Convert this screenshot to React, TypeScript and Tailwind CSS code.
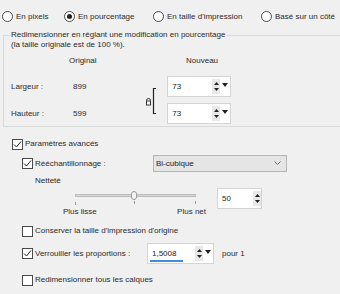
import React from "react";

const Radio = ({ checked, label }: { checked?: boolean; label: string }) => (
  <div className="flex items-center gap-[3px]">
    <div className="w-[11px] h-[11px] rounded-full border border-[#4a4a4a] bg-white flex items-center justify-center">
      {checked && <div className="w-[5px] h-[5px] rounded-full bg-[#222]" />}
    </div>
    <span>{label}</span>
  </div>
);

const Check = ({ checked }: { checked?: boolean }) => (
  <div className="w-[11px] h-[11px] border border-[#4a4a4a] bg-white flex items-center justify-center shrink-0">
    {checked && (
      <svg width="9" height="9" viewBox="0 0 9 9">
        <path d="M1 4.5 L3.5 7 L8 1.5" fill="none" stroke="#222" strokeWidth="1" />
      </svg>
    )}
  </div>
);

const Spin = ({ value, w, drop = true, underline = false }: { value: string; w: number; drop?: boolean; underline?: boolean }) => (
  <div className="flex items-stretch h-[21px] border border-[#d4d4d4] bg-white" style={{ width: w }}>
    <div className="flex-1 relative flex items-center pl-[4px] text-[#222]">
      {value}
      {underline && <div className="absolute left-[2px] bottom-[1px] w-[33px] h-[2px] bg-[#3d8fd6]" />}
    </div>
    <div className="w-[8px] my-[2px] bg-[#e8e8e8] flex flex-col items-center justify-center gap-[3px]">
      <svg width="5" height="3" viewBox="0 0 5 3"><path d="M0 3 L2.5 0 L5 3Z" fill="#222" /></svg>
      <svg width="5" height="3" viewBox="0 0 5 3"><path d="M0 0 L2.5 3 L5 0Z" fill="#222" /></svg>
    </div>
    {drop && (
      <div className="w-[10px] flex flex-col items-center pt-[6px]">
        <svg width="6" height="4" viewBox="0 0 6 4"><path d="M0 0 L3 4 L6 0Z" fill="#222" /></svg>
      </div>
    )}
  </div>
);

export default function App() {
  return (
    <div
      className="w-[340px] h-[294px] bg-[#f0f0f0] text-[#2a2a2a] text-[8px] leading-[10px] overflow-hidden"
      style={{ fontFamily: '"Liberation Sans", Arial, sans-serif' }}
    >
      <div className="flex items-center pt-[11px] pl-[2px] h-[22px]">
        <div className="w-[62px]"><Radio label="En pixels" /></div>
        <div className="w-[89px]"><Radio checked label="En pourcentage" /></div>
        <div className="w-[108px]"><Radio label="En taille d'impression" /></div>
        <Radio label="Basé sur un côté" />
      </div>

      <div className="ml-[3px] mt-[13px] w-[360px] h-[92px] border border-[#dadada]">
        <div className="-mt-[6px] pl-[7px]">
          <div><span className="bg-[#f0f0f0] pr-[2px]">Redimensionner en réglant une modification en pourcentage</span></div>
          <div>(la taille originale est de 100 %).</div>
        </div>
        <div className="grid grid-cols-[62px_74px_21px_70px] pl-[7px] mt-[6px]">
          <div />
          <div className="-ml-[4px]">Original</div>
          <div />
          <div className="pl-[18px]">Nouveau</div>
        </div>
        <div className="flex pl-[7px] mt-[10px]">
          <div className="flex flex-col">
            <div className="h-[21px] flex items-center"><span className="w-[62px]">Largeur :</span><span>899</span></div>
            <div className="h-[21px] mt-[6px] flex items-center"><span className="w-[62px]">Hauteur :</span><span>599</span></div>
          </div>
          <div className="ml-[60px] w-[21px] flex items-center pt-[2px]">
            <svg width="12" height="28" viewBox="0 0 12 28">
              <path d="M0.5 13.5 a2 2 0 0 1 4 0" fill="none" stroke="#333" strokeWidth="1" />
              <rect x="0.5" y="14" width="4" height="4" fill="#fff" stroke="#333" strokeWidth="1" />
              <path d="M10 1.5 H7.5 V26.5 H10" fill="none" stroke="#222" strokeWidth="1.2" />
            </svg>
          </div>
          <div className="flex flex-col">
            <Spin value="73" w={64} />
            <div className="mt-[6px]"><Spin value="73" w={64} /></div>
          </div>
        </div>
      </div>

      <div className="pl-[12px] mt-[11px] flex items-center gap-[2px] h-[12px]">
        <Check checked /> <span>Paramètres avancés</span>
      </div>
      <div className="pl-[22px] mt-[5px] flex items-center h-[17px]">
        <Check checked />
        <span className="ml-[2px] w-[118px]">Rééchantillonnage :</span>
        <div className="w-[134px] h-[17px] bg-[#e5e5e5] border border-[#b5b5b5] flex items-center pl-[2px] pr-[5px] justify-between text-[#222]">
          <span>Bi-cubique</span>
          <svg width="7" height="5" viewBox="0 0 7 5"><path d="M0.5 0.5 L3.5 3.5 L6.5 0.5" fill="none" stroke="#666" strokeWidth="1" /></svg>
        </div>
      </div>
      <div className="pl-[35px] mt-[4px]">Netteté</div>
      <div className="flex pl-[63px] mt-[2px]">
        <div className="w-[144px] flex flex-col">
          <div className="ml-[12px] w-[121px] h-[16px] relative">
            <div className="absolute left-0 right-0 top-[6px] h-[3px] bg-[#d6d6d6] border border-[#bdbdbd]" />
            <div className="absolute left-[56px] top-[3px] w-[6px] h-[9px] rounded-[3px] bg-[#f4f4f4] border border-[#9a9a9a]" />
            <div className="absolute left-0 top-[14px] w-[1px] h-[3px] bg-[#999]" />
            <div className="absolute left-[59px] top-[13px] w-[1px] h-[3px] bg-[#999]" />
            <div className="absolute right-0 top-[13px] w-[1px] h-[3px] bg-[#999]" />
          </div>
          <div className="flex justify-between mt-[3px]">
            <span>Plus lisse</span>
            <span className="mr-[1px]">Plus net</span>
          </div>
        </div>
        <div className="ml-[10px] mt-[0px]">
          <Spin value="50" w={45} drop={false} />
        </div>
      </div>
      <div className="pl-[22px] mt-[8px] flex items-center gap-[2px] h-[12px]">
        <Check /> <span>Conserver la taille d'impression d'origine</span>
      </div>
      <div className="pl-[22px] mt-[7px] flex items-center h-[19px]">
        <Check checked />
        <span className="ml-[2px] w-[112px]">Verrouiller les proportions :</span>
        <Spin value="1,5008" w={67} underline />
        <span className="ml-[8px]">pour 1</span>
      </div>
      <div className="pl-[22px] mt-[11px] flex items-center gap-[2px] h-[12px]">
        <Check /> <span>Redimensionner tous les calques</span>
      </div>
    </div>
  );
}
